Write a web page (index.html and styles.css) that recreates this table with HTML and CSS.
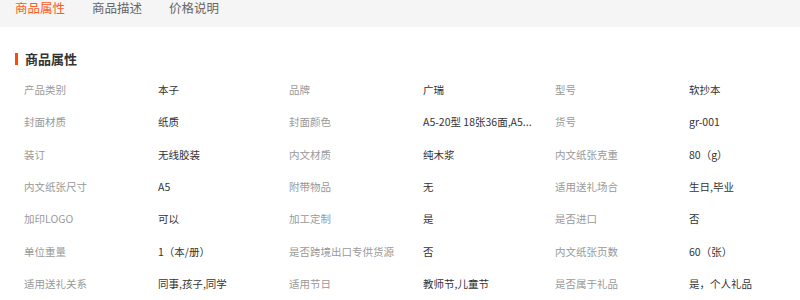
FILE: index.html
```html
<!DOCTYPE html>
<html lang="zh-CN">
<head>
<meta charset="utf-8">
<link rel="stylesheet" href="styles.css">
</head>
<body>
<div class="tabs">
  <span class="tab active">商品属性</span>
  <span class="tab">商品描述</span>
  <span class="tab">价格说明</span>
</div>
<div class="section">
  <h2 class="title">商品属性</h2>
  <div class="attrs">
    <span class="k">产品类别</span><span class="v">本子</span>
    <span class="k">品牌</span><span class="v">广瑞</span>
    <span class="k">型号</span><span class="v">软抄本</span>

    <span class="k">封面材质</span><span class="v">纸质</span>
    <span class="k">封面颜色</span><span class="v" title="A5-20型 18张36面,A5-20型 18张36面">A5-20型 18张36面,A5...</span>
    <span class="k">货号</span><span class="v">gr-001</span>

    <span class="k">装订</span><span class="v">无线胶装</span>
    <span class="k">内文材质</span><span class="v">纯木浆</span>
    <span class="k">内文纸张克重</span><span class="v">80（g）</span>

    <span class="k">内文纸张尺寸</span><span class="v">A5</span>
    <span class="k">附带物品</span><span class="v">无</span>
    <span class="k">适用送礼场合</span><span class="v">生日,毕业</span>

    <span class="k">加印LOGO</span><span class="v">可以</span>
    <span class="k">加工定制</span><span class="v">是</span>
    <span class="k">是否进口</span><span class="v">否</span>

    <span class="k">单位重量</span><span class="v">1（本/册）</span>
    <span class="k">是否跨境出口专供货源</span><span class="v">否</span>
    <span class="k">内文纸张页数</span><span class="v">60（张）</span>

    <span class="k">适用送礼关系</span><span class="v">同事,孩子,同学</span>
    <span class="k">适用节日</span><span class="v">教师节,儿童节</span>
    <span class="k">是否属于礼品</span><span class="v">是，个人礼品</span>
  </div>
  <div class="next">
    <span class="edge short"></span>
    <span class="edge long"></span>
  </div>
</div>
</body>
</html>
```
FILE: styles.css
```css
html, body {
  margin: 0;
  padding: 0;
  background: #fff;
  font-family: "Noto Sans CJK SC", "Liberation Sans", sans-serif;
}

.tabs {
  height: 27px;
  background: #f5f5f5;
  display: flex;
  gap: 27px;
  padding-left: 15px;
  box-sizing: border-box;
  align-items: flex-start;
}

.tab {
  font-size: 12.5px;
  line-height: 16px;
  color: #666;
}

.tab.active {
  color: #ff5a1f;
}

.section {
  padding-top: 25px;
}

.title {
  margin: 0 0 0 15px;
  font-size: 13px;
  line-height: 14px;
  font-weight: bold;
  color: #333;
  display: flex;
  align-items: center;
  gap: 7px;
}

.title::before {
  content: "";
  width: 3px;
  height: 12px;
  background: #ff4a00;
}

.attrs {
  margin-top: 8px;
  padding-left: 24px;
  display: grid;
  grid-template-columns: 134px 131px 134px 132px 134px 1fr;
  grid-auto-rows: 32.33px;
  align-items: center;
  font-size: 10.5px;
  line-height: 14px;
}

.k {
  color: #999;
  white-space: nowrap;
}

.v {
  color: #333;
  white-space: nowrap;
  overflow: hidden;
}

.next {
  display: flex;
  padding-left: 25px;
  margin-top: 1px;
}

.edge {
  height: 1px;
  background: #e8e8e8;
}

.edge.short {
  width: 55px;
  margin-right: 45px;
}

.edge.long {
  flex: 1;
}
```
